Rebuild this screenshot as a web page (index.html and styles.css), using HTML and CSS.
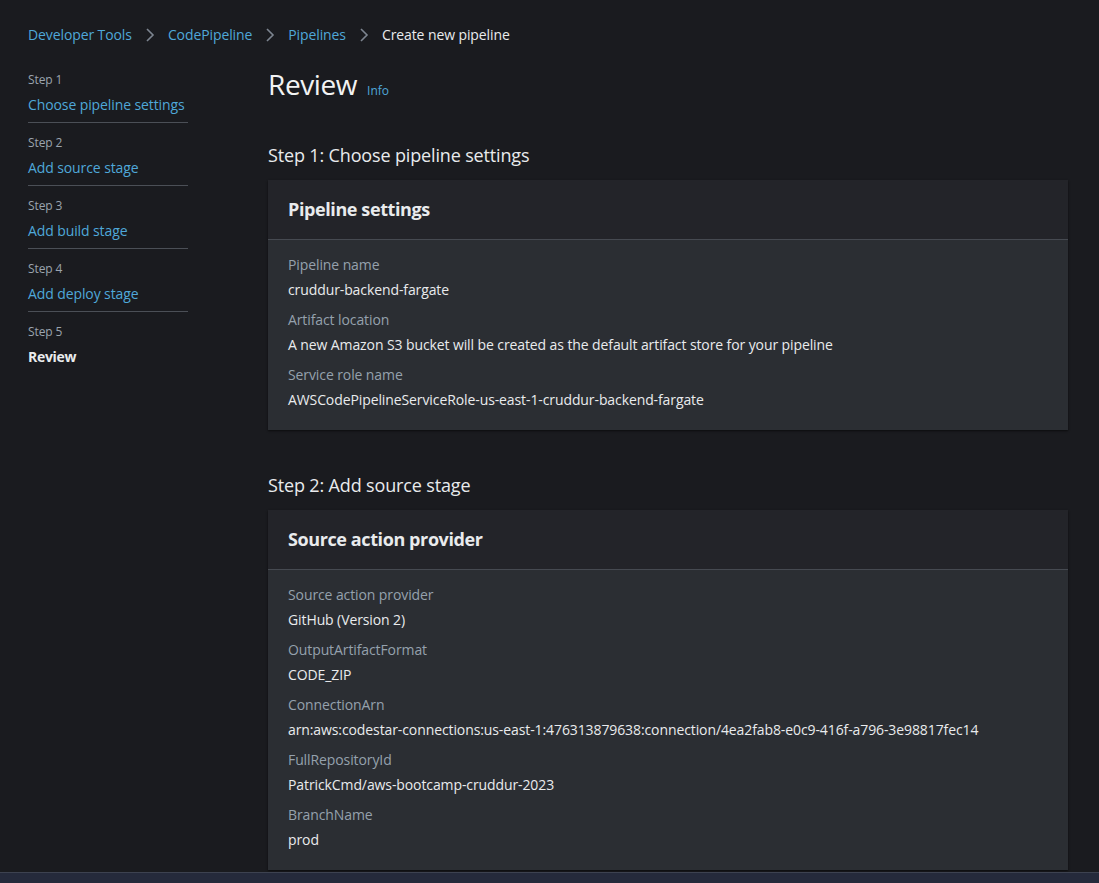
FILE: index.html
```html
<!DOCTYPE html>
<html>
<head>
<meta charset="utf-8">
<link rel="stylesheet" href="styles.css">
</head>
<body>
<div class="page">
  <nav class="crumbs">
    <a class="crumb-link">Developer Tools</a>
    <svg class="chev" width="12" height="14" viewBox="0 0 12 14"><polyline points="3,1 9,7 3,13" fill="none" stroke="#7d8590" stroke-width="1.6"/></svg>
    <a class="crumb-link">CodePipeline</a>
    <svg class="chev" width="12" height="14" viewBox="0 0 12 14"><polyline points="3,1 9,7 3,13" fill="none" stroke="#7d8590" stroke-width="1.6"/></svg>
    <a class="crumb-link">Pipelines</a>
    <svg class="chev" width="12" height="14" viewBox="0 0 12 14"><polyline points="3,1 9,7 3,13" fill="none" stroke="#7d8590" stroke-width="1.6"/></svg>
    <span class="crumb-current">Create new pipeline</span>
  </nav>
  <div class="layout">
    <aside class="steps">
      <div class="step">
        <div class="step-num">Step 1</div>
        <a class="step-link">Choose pipeline settings</a>
      </div>
      <div class="step">
        <div class="step-num">Step 2</div>
        <a class="step-link">Add source stage</a>
      </div>
      <div class="step">
        <div class="step-num">Step 3</div>
        <a class="step-link">Add build stage</a>
      </div>
      <div class="step">
        <div class="step-num">Step 4</div>
        <a class="step-link">Add deploy stage</a>
      </div>
      <div class="step last">
        <div class="step-num">Step 5</div>
        <span class="step-current">Review</span>
      </div>
    </aside>
    <main class="main">
      <div class="title-row">
        <h1 class="title">Review</h1>
        <a class="info">Info</a>
      </div>

      <h2 class="section-title">Step 1: Choose pipeline settings</h2>
      <section class="card">
        <div class="card-header"><h3>Pipeline settings</h3></div>
        <div class="card-body">
          <div class="field"><div class="label">Pipeline name</div><div class="value">cruddur-backend-fargate</div></div>
          <div class="field"><div class="label">Artifact location</div><div class="value">A new Amazon S3 bucket will be created as the default artifact store for your pipeline</div></div>
          <div class="field"><div class="label">Service role name</div><div class="value">AWSCodePipelineServiceRole-us-east-1-cruddur-backend-fargate</div></div>
        </div>
      </section>

      <h2 class="section-title second">Step 2: Add source stage</h2>
      <section class="card">
        <div class="card-header"><h3>Source action provider</h3></div>
        <div class="card-body">
          <div class="field"><div class="label">Source action provider</div><div class="value">GitHub (Version 2)</div></div>
          <div class="field"><div class="label">OutputArtifactFormat</div><div class="value">CODE_ZIP</div></div>
          <div class="field"><div class="label">ConnectionArn</div><div class="value">arn:aws:codestar-connections:us-east-1:476313879638:connection/4ea2fab8-e0c9-416f-a796-3e98817fec14</div></div>
          <div class="field"><div class="label">FullRepositoryId</div><div class="value">PatrickCmd/aws-bootcamp-cruddur-2023</div></div>
          <div class="field"><div class="label">BranchName</div><div class="value">prod</div></div>
        </div>
      </section>
    </main>
  </div>
</div>
<div class="bottom-bar"></div>
</body>
</html>
```

FILE: styles.css
```css
html, body {
  margin: 0;
  padding: 0;
  height: 100%;
  overflow: hidden;
}
body {
  background: #1a1b1f;
  font-family: "Open Sans", "Noto Sans", sans-serif;
  font-size: 14px;
  letter-spacing: -0.1px;
  color: #e9ebed;
}
.page {
  padding: 24px 31px 0 28px;
}
.crumbs {
  display: flex;
  align-items: center;
  height: 22px;
  line-height: 22px;
}
.crumb-link {
  color: #4fa8d9;
}
.chev {
  margin: 0 12px 0 12px;
}
.crumb-current {
  color: #e9ebed;
}
.layout {
  display: flex;
  gap: 80px;
  margin-top: 13px;
}
.steps {
  width: 160px;
  flex: none;
}
.step {
  border-bottom: 1px solid #4b4f56;
  padding: 12px 0 7px;
}
.step.last {
  border-bottom: none;
}
.step:first-child {
  padding-top: 13px;
}
.step-num {
  font-size: 12px;
  line-height: 16px;
  color: #9ba4ae;
  margin-bottom: 7px;
}
.step-link {
  display: block;
  color: #4fa8d9;
  line-height: 20px;
}
.step-current {
  display: block;
  font-weight: 700;
  color: #e9ebed;
  line-height: 20px;
  letter-spacing: -0.3px;
}
.main {
  width: 800px;
  flex: none;
}
.title-row {
  display: flex;
  align-items: baseline;
  gap: 10px;
  height: 44px;
  padding-top: 3px;
}
.title {
  margin: 0;
  font-size: 28px;
  font-weight: 400;
  line-height: 44px;
  color: #f2f3f3;
  letter-spacing: -0.4px;
}
.info {
  font-size: 12px;
  color: #4fa8d9;
  letter-spacing: 0;
}
.section-title {
  margin: 36px 0 12px;
  font-size: 18px;
  font-weight: 400;
  line-height: 26px;
  color: #e9ebed;
  letter-spacing: -0.15px;
}
.section-title.second {
  margin-top: 42px;
}
.card {
  background: #2b2e33;
  box-shadow: 0 1px 2px 0 rgba(0, 0, 0, 0.6);
}
.card-header {
  background: #232429;
  border-bottom: 1px solid #464a51;
  padding: 17px 20px 18px;
}
.card-header h3 {
  margin: 0;
  font-size: 18px;
  font-weight: 700;
  line-height: 24px;
  color: #e9ebed;
  letter-spacing: -0.4px;
}
.card-body {
  padding: 15px 20px 20px;
}
.field + .field {
  margin-top: 10px;
}
.label {
  color: #95a1ad;
  line-height: 20px;
  margin-bottom: 5px;
}
.value {
  color: #e9ebed;
  line-height: 20px;
}
.bottom-bar {
  position: fixed;
  left: 0;
  right: 0;
  bottom: 0;
  height: 10px;
  background: #252a3b;
  border-top: 1px solid #3d4250;
}
```
